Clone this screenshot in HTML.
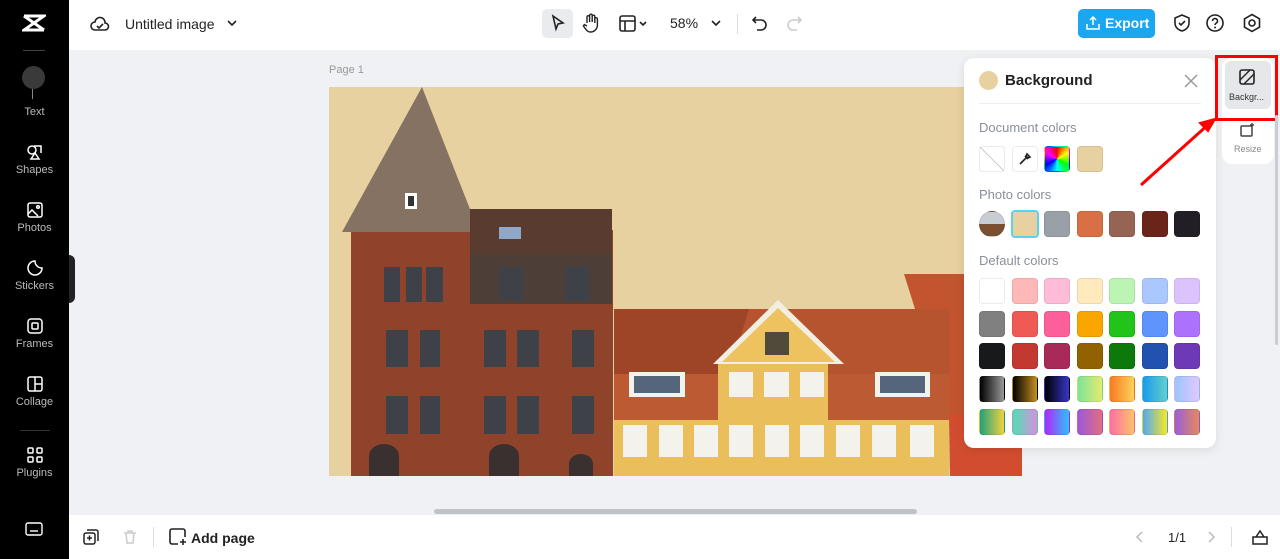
<!DOCTYPE html>
<html><head><style>
*{margin:0;padding:0;box-sizing:border-box}
body{width:1280px;height:559px;overflow:hidden;background:#eff1f4;font-family:"Liberation Sans",sans-serif;position:relative}
.side{position:absolute;left:0;top:0;width:69px;height:559px;background:#000;color:#bbb;font-size:11px;text-align:center}
.side .it{position:absolute;left:0;width:69px}
.side svg{display:block;margin:0 auto 3px}
.top{position:absolute;left:69px;top:0;right:0;height:50px;background:#fff}
.bot{position:absolute;left:69px;bottom:0;right:0;height:44px;background:#fff}
.sw{position:absolute;width:26px;height:26px;border-radius:4px;border:1px solid rgba(0,0,0,.08)}
.lbl{position:absolute;left:979px;font-size:13px;color:#8a8f99}
</style></head><body>
<div class="side">
 <svg style="position:absolute;left:22px;top:13px" width="24" height="20" viewBox="0 0 24 20"><path d="M2 3h20L2 17h20M2 3l20 14" stroke="#fff" stroke-width="3" fill="none"/></svg>
 <div style="position:absolute;left:23px;top:50px;width:22px;height:1px;background:#444"></div>
 <div style="position:absolute;left:22px;top:66px;width:23px;height:23px;border-radius:50%;background:#3a3a3a"></div>
 <div style="position:absolute;left:32px;top:89px;width:1px;height:10px;background:#888"></div>
 <div class="it" style="top:106px">Text</div>
 <div class="it" style="top:143px"><svg width="18" height="18" viewBox="0 0 18 18" fill="none" stroke="#fff" stroke-width="1.5"><circle cx="6" cy="7" r="4"/><path d="M8 3h7v7M9 10l-4 6h8z"/></svg>Shapes</div>
 <div class="it" style="top:201px"><svg width="18" height="18" viewBox="0 0 18 18" fill="none" stroke="#fff" stroke-width="1.5"><rect x="2" y="2" width="14" height="14" rx="2"/><path d="M2 13l4-4 6 6"/><circle cx="12" cy="6" r="1.3"/></svg>Photos</div>
 <div class="it" style="top:259px"><svg width="18" height="18" viewBox="0 0 18 18" fill="none" stroke="#fff" stroke-width="1.5"><path d="M16 9A7 7 0 1 1 9 2c0 4 3 7 7 7z"/></svg>Stickers</div>
 <div class="it" style="top:317px"><svg width="18" height="18" viewBox="0 0 18 18" fill="none" stroke="#fff" stroke-width="1.5"><rect x="2" y="2" width="14" height="14" rx="3"/><rect x="6" y="6" width="6" height="6" rx="1"/></svg>Frames</div>
 <div class="it" style="top:375px"><svg width="18" height="18" viewBox="0 0 18 18" fill="none" stroke="#fff" stroke-width="1.5"><rect x="2" y="2" width="14" height="14" rx="2"/><path d="M9 2v14M9 9h7"/></svg>Collage</div>
 <div style="position:absolute;left:20px;top:430px;width:30px;height:1px;background:#333"></div>
 <div class="it" style="top:446px"><svg width="18" height="18" viewBox="0 0 18 18" fill="none" stroke="#fff" stroke-width="1.5"><rect x="2" y="2" width="5" height="5" rx="1"/><rect x="11" y="2" width="5" height="5" rx="1"/><rect x="2" y="11" width="5" height="5" rx="1"/><rect x="11" y="11" width="5" height="5" rx="1"/></svg>Plugins</div>
 <svg style="position:absolute;left:25px;top:522px" width="18" height="14" viewBox="0 0 18 14" fill="none" stroke="#fff" stroke-width="1.4"><rect x="1" y="1" width="16" height="12" rx="2"/><path d="M5 9h8"/></svg>
</div>
<div style="position:absolute;left:69px;top:255px;width:6px;height:48px;background:#222;border-radius:0 6px 6px 0"></div>
<div class="top">
 <svg style="position:absolute;left:21px;top:15px" width="20" height="18" viewBox="0 0 20 18" fill="none" stroke="#222" stroke-width="1.6"><path d="M5 15a4 4 0 0 1 0-8 5 5 0 0 1 10 1 3.5 3.5 0 0 1 0 7z"/><path d="M7 11l2 2 4-4"/></svg>
 <div style="position:absolute;left:56px;top:16px;font-size:14px;color:#222">Untitled image</div>
 <svg style="position:absolute;left:157px;top:18px" width="12" height="10" viewBox="0 0 12 10"><path d="M2 3l4 4 4-4" stroke="#222" stroke-width="1.6" fill="none"/></svg>
 <div style="position:absolute;left:473px;top:9px;width:31px;height:29px;background:#e9ebef;border-radius:5px"></div>
 <svg style="position:absolute;left:481px;top:14px" width="16" height="18" viewBox="0 0 16 18"><path d="M3 2l10 7-5 1-2 5z" stroke="#222" stroke-width="1.6" fill="none"/></svg>
 <svg style="position:absolute;left:513px;top:13px" width="18" height="20" viewBox="0 0 18 20"><path d="M5 10V4a1.3 1.3 0 0 1 2.6 0v5V2.5a1.3 1.3 0 0 1 2.6 0V9V3.5a1.3 1.3 0 0 1 2.6 0V10V6a1.3 1.3 0 0 1 2.6 0v6a7 7 0 0 1-7 7c-3 0-4-2-7-6l1-1.5 2.6 1.5" stroke="#222" stroke-width="1.4" fill="none"/></svg>
 <svg style="position:absolute;left:550px;top:15px" width="30" height="18" viewBox="0 0 30 18"><rect x="1" y="1" width="15" height="15" rx="2" stroke="#222" stroke-width="1.6" fill="none"/><path d="M1 6h15M6 6v10M21 7l3 3 3-3" stroke="#222" stroke-width="1.6" fill="none"/></svg>
 <div style="position:absolute;left:601px;top:15px;font-size:14px;color:#222">58%</div>
 <svg style="position:absolute;left:641px;top:18px" width="12" height="10" viewBox="0 0 12 10"><path d="M2 3l4 4 4-4" stroke="#222" stroke-width="1.6" fill="none"/></svg>
 <div style="position:absolute;left:668px;top:14px;width:1px;height:20px;background:#ddd"></div>
 <svg style="position:absolute;left:682px;top:14px" width="18" height="18" viewBox="0 0 18 18"><path d="M5 3L2 6l3 3M2 6h8a5 5 0 0 1 0 10H6" stroke="#222" stroke-width="1.6" fill="none"/></svg>
 <svg style="position:absolute;left:716px;top:14px" width="18" height="18" viewBox="0 0 18 18"><path d="M13 3l3 3-3 3M16 6H8a5 5 0 0 0 0 10h4" stroke="#ccc" stroke-width="1.6" fill="none"/></svg>
 <div style="position:absolute;left:1009px;top:9px;width:77px;height:29px;background:#1ba7f0;border-radius:5px;color:#fff;font-size:14px;font-weight:bold;padding:6px 0 0 27px">Export</div>
 <svg style="position:absolute;left:1017px;top:16px" width="14" height="14" viewBox="0 0 14 14"><path d="M7 9V1M4 4l3-3 3 3M1 8v5h12V8" stroke="#fff" stroke-width="1.5" fill="none"/></svg>
 <svg style="position:absolute;left:1103px;top:13px" width="20" height="20" viewBox="0 0 20 20"><path d="M10 2l7 3v5c0 4-3 7-7 8-4-1-7-4-7-8V5z M7 10l2 2 4-4" stroke="#222" stroke-width="1.6" fill="none"/></svg>
 <svg style="position:absolute;left:1136px;top:13px" width="20" height="20" viewBox="0 0 20 20"><circle cx="10" cy="10" r="8" stroke="#222" stroke-width="1.6" fill="none"/><path d="M7.5 8a2.5 2.5 0 1 1 3.5 2.3c-.7.4-1 .9-1 1.7" stroke="#222" stroke-width="1.6" fill="none"/><circle cx="10" cy="14.5" r="1" fill="#222"/></svg>
 <svg style="position:absolute;left:1173px;top:13px" width="20" height="20" viewBox="0 0 20 20"><path d="M10 1.5l7.5 4.3v8.4L10 18.5l-7.5-4.3V5.8z" stroke="#222" stroke-width="1.6" fill="none"/><circle cx="10" cy="10" r="3" stroke="#222" stroke-width="1.6" fill="none"/></svg>
</div>
<div style="position:absolute;left:329px;top:64px;font-size:11px;color:#999">Page 1</div>
<div style="position:absolute;left:329px;top:87px;width:693px;height:389px;background:#e8d1a1;overflow:hidden">
 <svg width="693" height="389" viewBox="0 0 693 389">
  <rect x="22" y="143" width="262" height="246" fill="#8f432b"/>
  <polygon points="13,145 93,0 150,145" fill="#857262"/>
  <rect x="76" y="106" width="12" height="16" fill="#fff"/><rect x="79" y="109" width="6" height="10" fill="#333"/>
  <rect x="141" y="122" width="142" height="95" fill="#4d3e38"/>
  <rect x="141" y="122" width="142" height="45" fill="#5a3b30"/>
  <rect x="170" y="140" width="22" height="12" fill="#8fa8c8"/>
  <polygon points="575,187 634,187 693,205 693,389 621,389 620,330" fill="#c2552f"/>
  <rect x="285" y="222" width="335" height="167" fill="#b5542e"/>
  <polygon points="285,222 420,222 400,287 285,287" fill="#9e4427"/>
  <rect x="285" y="287" width="335" height="46" fill="#bc5a33"/>
  <rect x="389" y="277" width="110" height="60" fill="#ebbe5c"/>
  <polygon points="384,277 449,213 515,277" fill="#f2eee2"/>
  <polygon points="393,275 449,221 506,275" fill="#eec35f"/>
  <rect x="285" y="333" width="335" height="56" fill="#ebbe5c"/>
  <rect x="621" y="327" width="72" height="62" fill="#d24d2f"/>
  <rect x="436" y="245" width="24" height="23" fill="#4f4a3a"/>
  <g fill="#3e4148">
   <rect x="55" y="180" width="16" height="35"/><rect x="77" y="180" width="16" height="35"/><rect x="97" y="180" width="17" height="35"/>
   <rect x="57" y="243" width="22" height="37"/><rect x="91" y="243" width="20" height="37"/>
   <rect x="155" y="243" width="22" height="37"/><rect x="188" y="243" width="22" height="37"/><rect x="243" y="243" width="22" height="37"/>
   <rect x="57" y="309" width="22" height="38"/><rect x="91" y="309" width="20" height="38"/>
   <rect x="155" y="309" width="22" height="38"/><rect x="188" y="309" width="22" height="38"/><rect x="243" y="309" width="22" height="38"/>
   <rect x="170" y="180" width="24" height="33"/><rect x="236" y="180" width="25" height="33"/>
  </g>
  <g fill="#f4f2ec">
   <rect x="300" y="285" width="56" height="25"/><rect x="546" y="285" width="55" height="25"/>
   <rect x="400" y="285" width="24" height="25"/><rect x="435" y="285" width="25" height="25"/><rect x="471" y="285" width="24" height="25"/>
   <rect x="294" y="338" width="24" height="32"/><rect x="330" y="338" width="24" height="32"/><rect x="365" y="338" width="24" height="32"/><rect x="400" y="338" width="24" height="32"/><rect x="436" y="338" width="24" height="32"/><rect x="471" y="338" width="24" height="32"/><rect x="507" y="338" width="24" height="32"/><rect x="543" y="338" width="24" height="32"/><rect x="581" y="338" width="24" height="32"/>
  </g>
  <g fill="#55657a"><rect x="305" y="289" width="46" height="17"/><rect x="551" y="289" width="45" height="17"/></g>
  <g fill="#3a3030"><path d="M40 389v-20a15 12 0 0 1 30 0v20z"/><path d="M160 389v-20a15 12 0 0 1 30 0v20z"/><path d="M240 389v-12a12 10 0 0 1 24 0v12z"/></g>
 </svg>
</div>
<div style="position:absolute;left:964px;top:58px;width:252px;height:390px;background:#fff;border-radius:10px;box-shadow:0 2px 10px rgba(0,0,0,.1)"></div>
<div style="position:absolute;left:979px;top:71px;width:19px;height:19px;border-radius:50%;background:#e8d1a1"></div>
<div style="position:absolute;left:1005px;top:72px;font-size:15px;font-weight:bold;color:#222">Background</div>
<svg style="position:absolute;left:1184px;top:74px" width="14" height="14" viewBox="0 0 14 14"><path d="M1 1l12 12M13 1L1 13" stroke="#999" stroke-width="1.5"/></svg>
<div style="position:absolute;left:979px;top:103px;width:222px;height:1px;background:#eee"></div>
<div class="lbl" style="top:120px">Document colors</div>
<div class="sw" style="left:979px;top:146px;background:linear-gradient(45deg,#fff 48%,#ccc 49%,#ccc 51%,#fff 52%)"></div>
<div class="sw" style="left:1012px;top:146px;background:#fff"></div>
<svg style="position:absolute;left:1018px;top:152px" width="14" height="14" viewBox="0 0 14 14"><path d="M2 12l6-6M7 4l3 3M9 2l3 3-2 1-2-2z" stroke="#222" stroke-width="1.6" fill="none"/></svg>
<div class="sw" style="left:1044px;top:146px;background:conic-gradient(red,yellow,lime,cyan,blue,magenta,red)"></div>
<div class="sw" style="left:1077px;top:146px;background:#e8d1a1"></div>
<div class="lbl" style="top:187px">Photo colors</div>
<div class="sw" style="left:979px;top:211px;border-radius:50%;background:linear-gradient(#c8ccd4 50%,#7a5030 50%)"></div>
<div class="sw" style="left:1011px;top:210px;width:28px;height:28px;background:#e8d1a1;border:2px solid #5cd0f0"></div>
<div class="sw" style="left:1044px;top:211px;background:#9aa0a8"></div>
<div class="sw" style="left:1077px;top:211px;background:#d96f45"></div>
<div class="sw" style="left:1109px;top:211px;background:#956453"></div>
<div class="sw" style="left:1142px;top:211px;background:#6a2418"></div>
<div class="sw" style="left:1174px;top:211px;background:#211f25"></div>
<div class="lbl" style="top:253px">Default colors</div>
<div id="g"></div>
<script>
var c=[["#fff","#ffb8b8","#ffbcd9","#ffe9bd","#bcf5b3","#abc8fe","#dcc3fd"],
["#808080","#f05a55","#fd5f9a","#f9a700","#22c31b","#5f94fd","#ad72fb"],
["#17191d","#c43832","#a72a58","#936200","#0d790a","#2152af","#6e39b6"],
["linear-gradient(90deg,#000,#999)","linear-gradient(90deg,#000,#c58f20)","linear-gradient(90deg,#000,#3535c8)","linear-gradient(90deg,#7ce39a,#e6ea6d)","linear-gradient(90deg,#f97a24,#fbd25a)","linear-gradient(90deg,#1c99ef,#62d1c9)","linear-gradient(90deg,#9bc6fd,#e1c7fd)"],
["linear-gradient(90deg,#21a17b,#f1d33e)","linear-gradient(90deg,#4fe0b0,#d98fe2)","linear-gradient(90deg,#b624fc,#27c4fd)","linear-gradient(90deg,#9b58dd,#e46d7e)","linear-gradient(90deg,#fd6fa4,#fcc26a)","linear-gradient(90deg,#50a9f6,#f9e823)","linear-gradient(90deg,#9a5ede,#e58a59)"]];
var h="";for(var r=0;r<5;r++)for(var k=0;k<7;k++)h+='<div class="sw" style="left:'+(979+k*32.5)+'px;top:'+(278+r*32.7)+'px;background:'+c[r][k]+'"></div>';
document.getElementById("g").innerHTML=h;
</script>
<div style="position:absolute;left:1222px;top:58px;width:52px;height:106px;background:#fff;border-radius:10px"></div>
<div style="position:absolute;left:1225px;top:61px;width:46px;height:48px;background:#e5e7ea;border-radius:6px"></div>
<svg style="position:absolute;left:1239px;top:69px" width="16" height="16" viewBox="0 0 16 16"><rect x="1" y="1" width="14" height="14" rx="2" stroke="#222" stroke-width="1.6" fill="none"/><path d="M1 11L11 1M5 15L15 5" stroke="#222" stroke-width="1.4"/></svg>
<div style="position:absolute;left:1229px;top:92px;font-size:9px;color:#333">Backgr...</div>
<svg style="position:absolute;left:1239px;top:122px" width="16" height="16" viewBox="0 0 16 16"><rect x="2" y="4" width="11" height="10" rx="1" stroke="#444" stroke-width="1.5" fill="none"/><path d="M13 1v4M11 3h4" stroke="#444" stroke-width="1.4"/></svg>
<div style="position:absolute;left:1234px;top:144px;font-size:9px;color:#888">Resize</div>
<div style="position:absolute;left:1215px;top:55px;width:63px;height:66px;border:3px solid #f00"></div>
<svg style="position:absolute;left:1135px;top:115px" width="85" height="75" viewBox="0 0 85 75"><path d="M6 70L75 8" stroke="#f00" stroke-width="3"/><path d="M80 4l-15 4 8 8z" fill="#f00" stroke="#f00" stroke-width="2"/></svg>
<div style="position:absolute;left:1275px;top:115px;width:3px;height:230px;background:#c9ccd1;border-radius:2px"></div>
<div style="position:absolute;left:434px;top:509px;width:483px;height:5px;background:#bfc2c7;border-radius:3px"></div>
<div class="bot">
 <svg style="position:absolute;left:14px;top:14px" width="16" height="16" viewBox="0 0 16 16"><rect x="1" y="4" width="11" height="11" rx="2" stroke="#222" stroke-width="1.5" fill="none"/><path d="M4 1h9a2 2 0 0 1 2 2v9M4 9h5M6.5 6.5v5" stroke="#222" stroke-width="1.5" fill="none"/></svg>
 <svg style="position:absolute;left:53px;top:14px" width="16" height="16" viewBox="0 0 16 16"><path d="M2 4h12M6 4V2h4v2M4 4l1 10h6l1-10" stroke="#ccc" stroke-width="1.5" fill="none"/></svg>
 <div style="position:absolute;left:84px;top:12px;width:1px;height:20px;background:#ddd"></div>
 <svg style="position:absolute;left:100px;top:13px" width="18" height="18" viewBox="0 0 18 18"><path d="M9 16H3a2 2 0 0 1-2-2V3a2 2 0 0 1 2-2h11a2 2 0 0 1 2 2v6M14 11v6M11 14h6" stroke="#222" stroke-width="1.6" fill="none"/></svg>
 <div style="position:absolute;left:122px;top:15px;font-size:14px;font-weight:bold;color:#222">Add page</div>
 <svg style="position:absolute;left:1066px;top:16px" width="10" height="12" viewBox="0 0 10 12"><path d="M7 1L2 6l5 5" stroke="#bbb" stroke-width="1.5" fill="none"/></svg>
 <div style="position:absolute;left:1099px;top:15px;font-size:13px;color:#222">1/1</div>
 <svg style="position:absolute;left:1137px;top:16px" width="10" height="12" viewBox="0 0 10 12"><path d="M3 1l5 5-5 5" stroke="#bbb" stroke-width="1.5" fill="none"/></svg>
 <div style="position:absolute;left:1162px;top:12px;width:1px;height:20px;background:#ddd"></div>
 <svg style="position:absolute;left:1183px;top:14px" width="16" height="16" viewBox="0 0 16 16"><path d="M1 8h14v7H1zM4 8l4-6 4 6" stroke="#222" stroke-width="1.5" fill="none"/></svg>
</div>
</body></html>
